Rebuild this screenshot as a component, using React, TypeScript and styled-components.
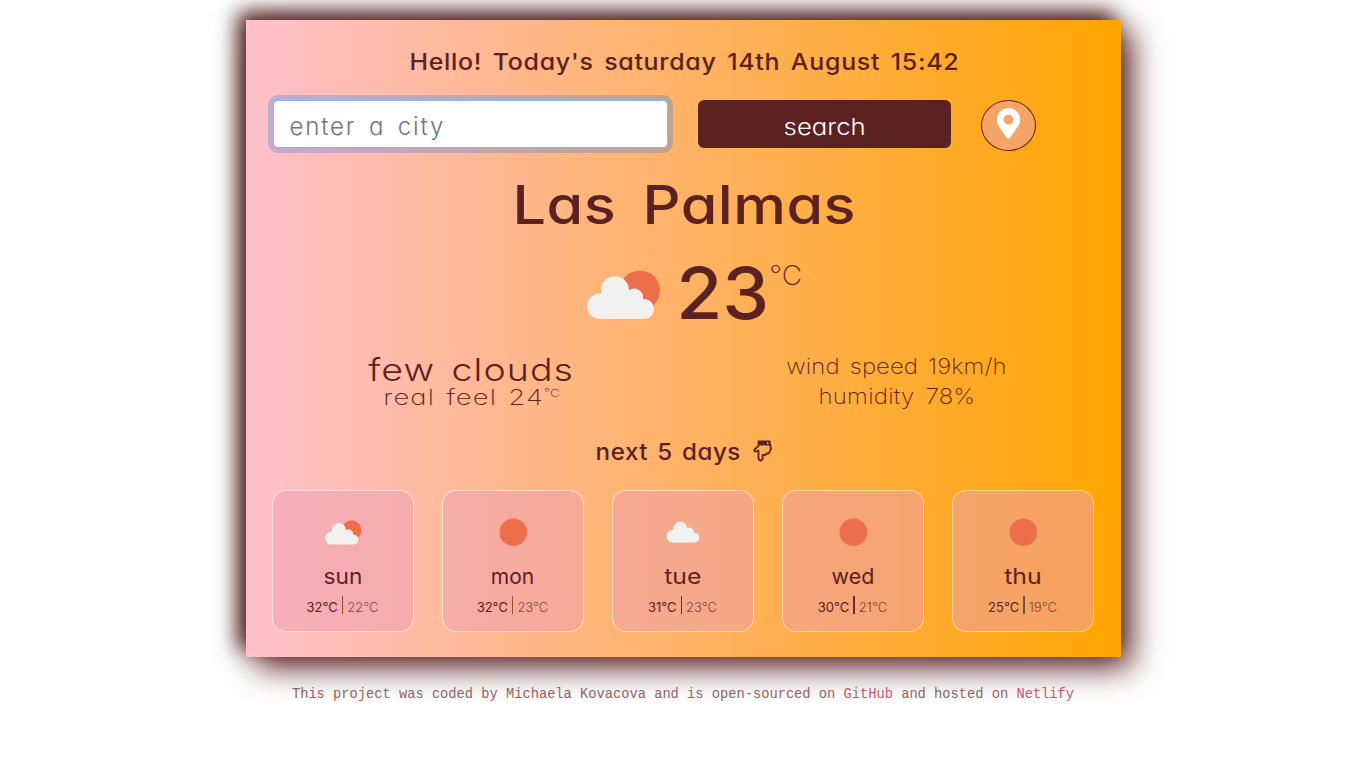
import React from "react";
import styled, { createGlobalStyle } from "styled-components";
import { FaMapMarkerAlt } from "react-icons/fa";

const GlobalStyle = createGlobalStyle`
  *, *::before, *::after { box-sizing: border-box; }
  body {
    margin: 0;
    background: #fff;
    color: #5c2121;
    font-family: Inter, "Open Sans", sans-serif;
    font-feature-settings: "cv11";
  }
`;

const Page = styled.div`
  display: flex;
  flex-direction: column;
  align-items: center;
  padding-top: 20px;
`;

const Panel = styled.main`
  width: 875px;
  height: 637px;
  padding: 27px 27px 25px 26px;
  background: linear-gradient(to right, pink, orange);
  box-shadow: 10px 10px 30px #5c2121, -8px -8px 20px #4c1c1c;
`;

const Text = styled.span<{
  $size: number;
  $weight?: number;
  $line?: number;
  $spacing?: number;
  $word?: number;
  $stretch?: number;
}>`
  display: block;
  white-space: pre;
  font-size: ${(p) => p.$size}px;
  font-weight: ${(p) => p.$weight ?? 400};
  line-height: ${(p) => p.$line ?? 24}px;
  letter-spacing: ${(p) => p.$spacing ?? 0}px;
  word-spacing: ${(p) => p.$word ?? 0}px;
  transform: ${(p) => (p.$stretch ? `scaleX(${p.$stretch})` : "none")};
`;

const Centered = styled.div<{ $top?: number }>`
  display: flex;
  justify-content: center;
  margin-top: ${(p) => p.$top ?? 0}px;
  padding-left: 3px;
`;

const SearchRow = styled.form`
  display: flex;
  align-items: flex-start;
  height: 52px;
  margin-top: 23px;
  padding-left: 1px;
`;

const CityInput = styled.input`
  width: 395px;
  height: 48px;
  padding: 5px 16px 0;
  border: 1px solid #86b7fe;
  border-radius: 5px;
  outline: 0;
  background: #fff;
  box-shadow: 0 0 0 5px rgba(13, 110, 253, 0.25);
  color: #5c2121;
  font: 300 24px Inter, sans-serif;
  font-feature-settings: "cv11";
  letter-spacing: 1.85px;
  word-spacing: 4px;
  &::placeholder {
    color: #6c757d;
    opacity: 1;
  }
`;

const SearchButton = styled.button`
  display: flex;
  align-items: center;
  justify-content: center;
  width: 253px;
  height: 48px;
  margin-left: 30px;
  padding: 5px 0 0 2px;
  border: 0;
  border-radius: 6px;
  background: #5c2121;
  color: #fff;
  font-family: inherit;
  font-feature-settings: "cv11";
`;

const LocationButton = styled.button`
  display: flex;
  justify-content: center;
  width: 55px;
  height: 51px;
  margin-left: 30px;
  padding: 7px 0 0;
  border: 1px solid #5c2121;
  border-radius: 50%;
  background: #f6a366;
  color: #fff;
`;

const Current = styled.div`
  display: flex;
  height: 60px;
  margin-top: 26px;
  padding-left: 315px;
`;

const CurrentIcon = styled.svg`
  width: 74px;
  height: 50px;
  margin: 7px 17px 0 0;
`;

const Unit = styled.div`
  margin: -1px 0 0 3px;
`;

const Details = styled.div`
  display: grid;
  grid-template-columns: 425px 425px;
  justify-content: center;
  height: 60px;
  margin-top: 28px;
`;

const Column = styled.div<{ $top?: number }>`
  display: flex;
  flex-direction: column;
  align-items: center;
  padding-top: ${(p) => p.$top ?? 0}px;
  padding-left: 3px;
`;

const Feel = styled.div`
  display: flex;
  align-items: flex-start;
  transform: scaleX(1.25);
`;

const NextDays = styled.div`
  display: flex;
  justify-content: center;
  gap: 15px;
  height: 30px;
  margin-top: 26px;
  padding-left: 7px;
`;

const PointDown = styled.svg`
  width: 20px;
  height: 22px;
  margin-top: 3px;
`;

const Forecast = styled.div`
  display: flex;
  justify-content: space-between;
  margin-top: 23px;
`;

const DayCard = styled.article`
  display: flex;
  flex-direction: column;
  align-items: center;
  width: 142px;
  height: 142px;
  padding-top: 16px;
  border: 1px solid rgba(255, 255, 255, 0.5);
  border-radius: 14px;
  background: rgba(237, 158, 178, 0.5);
  background-clip: padding-box;
`;

const DayIcon = styled.svg`
  width: 50px;
  height: 50px;
  margin-bottom: 8px;
`;

const Temps = styled.div`
  display: flex;
  align-items: center;
  height: 20px;
  margin-top: 8px;
`;

const Divider = styled.i<{ $color: string }>`
  width: 1.5px;
  height: 18px;
  margin: 0 4px 5px;
  background: ${(p) => p.$color};
`;

const Low = styled.div`
  opacity: 0.75;
`;

const Footer = styled.footer`
  margin-top: 28px;
  color: #8e6464;
  font: 13.73px/20px "Liberation Mono", monospace;
  white-space: pre;
`;

const Link = styled.a`
  color: #c4566f;
`;

const Cloud = () => (
  <path
    fill="#f1f1ef"
    d="M13 49a12.8 12.8 0 0 1 0-25.600q.5 0 1 .1v-3a14 14 0 0 1 28-.5v.2a9 9 0 0 1 14 8.500v.4a9.900 9.900 0 1 1 2 19.900z"
  />
);

const SkyIcon = ({ kind }: { kind: string }) => (
  <DayIcon viewBox="0 0 50 50">
    {kind === "sun" && <circle cx="25.300" cy="25.300" r="13.800" fill="#ec6e4c" />}
    {kind === "partly" && (
      <g transform="translate(7 13) scale(.5)">
        <circle cx="53" cy="20.500" r="20" fill="#ec6e4c" />
        <Cloud />
      </g>
    )}
    {kind === "cloud" && (
      <g transform="translate(8.500 11.500) scale(.49)">
        <Cloud />
      </g>
    )}
  </DayIcon>
);

const days = [
  { name: "sun", stretch: 1.08, kind: "partly", high: "32°C", low: "22°C", bar: "#a4461f" },
  { name: "mon", stretch: 1, kind: "sun", high: "32°C", low: "23°C", bar: "#a4461f" },
  { name: "tue", stretch: 1.18, kind: "cloud", high: "31°C", low: "23°C", bar: "#7d2226" },
  { name: "wed", stretch: 1.02, kind: "sun", high: "30°C", low: "21°C", bar: "#7d2226" },
  { name: "thu", stretch: 1.18, kind: "sun", high: "25°C", low: "19°C", bar: "#6b5444" },
];

export default function App() {
  return (
    <Page>
      <GlobalStyle />
      <Panel>
        <Centered>
          <Text $size={23} $weight={460} $line={30} $spacing={0.65} $word={3} $stretch={1.085}>
            Hello! Today's saturday 14th August 15:42
          </Text>
        </Centered>
        <SearchRow>
          <CityInput placeholder="enter a city" />
          <SearchButton type="button">
            <Text $size={23} $weight={350} $stretch={1.12}>search</Text>
          </SearchButton>
          <LocationButton type="button" aria-label="Use my location">
            <FaMapMarkerAlt size={31} />
          </LocationButton>
        </SearchRow>
        <Centered $top={21}>
          <Text $size={53} $weight={460} $line={64} $spacing={0.4} $word={9} $stretch={1.12}>
            Las Palmas
          </Text>
        </Centered>
        <Current>
          <CurrentIcon viewBox="0 0 74 50">
            <circle cx="53" cy="20.500" r="20" fill="#ec6e4c" />
            <Cloud />
          </CurrentIcon>
          <Text $size={72} $weight={480} $line={60} $stretch={1.04}>23</Text>
          <Unit>
            <Text $size={27} $weight={250} $line={28} $stretch={1.04}>°C</Text>
          </Unit>
        </Current>
        <Details>
          <Column $top={3}>
            <Text $size={31} $weight={280} $line={32} $spacing={0.9} $word={4} $stretch={1.21}>few clouds</Text>
            <Feel>
              <Text $size={22} $weight={250} $line={22} $spacing={0.9} $word={2}>real feel 24</Text>
              <Text $size={11} $weight={250} $line={14}>°C</Text>
            </Feel>
          </Column>
          <Column>
            <Text $size={22} $weight={250} $line={30} $spacing={0.1} $word={3} $stretch={1.085}>wind speed 19km/h</Text>
            <Text $size={22} $weight={250} $line={30} $spacing={0.2} $word={4} $stretch={1.09}>humidity 78%</Text>
          </Column>
        </Details>
        <NextDays>
          <Text $size={23} $weight={450} $line={30} $spacing={0.55} $word={2} $stretch={1.05}>next 5 days</Text>
          <PointDown viewBox="0 0 20 22" fill="none" stroke="#5c2121" strokeWidth="1.800" strokeLinejoin="round">
            <path d="M6 5.500 1.500 9.500q-.8 2 1.300 2l2.700-.8v7.300q.2 2.500 2.100 2.500t2-2.500v-3h2.200q1.500 0 1.700-1.500h1.300q1.700 0 1.900-2l1.300-2.500-1-5" />
            <path d="M5.500 1.500h11.300v3H5.500z" fill="#5c2121" />
            <path d="M14.700 2.300v1.600" stroke="#ffb25c" strokeWidth="1.400" />
          </PointDown>
        </NextDays>
        <Forecast>
          {days.map((day) => (
            <DayCard key={day.name}>
              <SkyIcon kind={day.kind} />
              <Text $size={21} $weight={430} $stretch={day.stretch}>{day.name}</Text>
              <Temps>
                <Text $size={13} $weight={400} $line={20}>{day.high}</Text>
                <Divider $color={day.bar} />
                <Low>
                  <Text $size={13} $weight={300} $line={20}>{day.low}</Text>
                </Low>
              </Temps>
            </DayCard>
          ))}
        </Forecast>
      </Panel>
      <Footer>
        This project was coded by Michaela Kovacova and is open-sourced on <Link>GitHub</Link> and hosted on <Link>Netlify</Link>
      </Footer>
    </Page>
  );
}
